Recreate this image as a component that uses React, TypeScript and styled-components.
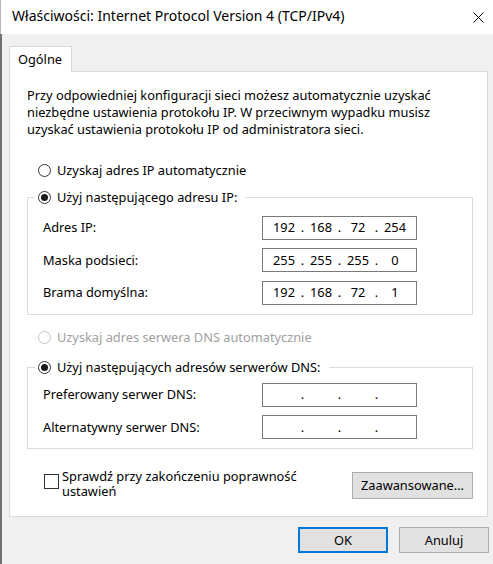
import React from "react";
import styled, { createGlobalStyle } from "styled-components";

const GlobalStyle = createGlobalStyle`
  html, body {
    margin: 0;
    padding: 0;
    background: #f0f0f0;
  }
  body {
    font-family: "Noto Sans", "Segoe UI", sans-serif;
    font-size: 12.8px;
    color: #000;
  }
  *, *::before, *::after {
    box-sizing: border-box;
  }
`;

const Window = styled.div`
  width: 493px;
  height: 564px;
  display: flex;
  flex-direction: column;
  overflow: hidden;
  background: #f0f0f0;
`;

const TitleBar = styled.div`
  height: 34px;
  flex: none;
  background: #fff;
  display: flex;
  align-items: flex-start;
  justify-content: space-between;
  padding: 5.5px 9px 0 11px;
  border-left: 1px solid #b8b8b8;
`;

const Title = styled.div`
  font-size: 14px;
  line-height: 20px;
  color: #000;
`;

const CloseIcon = styled.svg`
  width: 11px;
  height: 11px;
  margin-top: 6px;
`;

const Body = styled.div`
  flex: 1;
  display: flex;
  flex-direction: column;
  padding: 12px 5px 10px 7px;
  border-left: 2px solid #707070;
`;

const TabStrip = styled.div`
  display: flex;
`;

const Tab = styled.div`
  position: relative;
  z-index: 1;
  background: #fff;
  border: 1px solid #d9d9d9;
  border-bottom: none;
  padding: 3.5px 9px 4.5px 8px;
  line-height: 17px;
  margin-bottom: -1px;
`;

const Panel = styled.div`
  background: #fff;
  border: 1px solid #d9d9d9;
  padding: 15px 14px 17.5px 17px;
  display: flex;
  flex-direction: column;
`;

const Intro = styled.p`
  margin: 0;
  line-height: 17px;
`;

const RadioLabel = styled.span<{ $disabled?: boolean }>`
  display: flex;
  align-items: center;
  gap: 6px;
  height: 17px;
  line-height: 17px;
  color: ${(p) => (p.$disabled ? "#a0a0a0" : "#000")};
`;

const RadioCircle = styled.span<{ $checked?: boolean; $disabled?: boolean }>`
  width: 13px;
  height: 13px;
  flex: none;
  border-radius: 50%;
  border: 1px solid ${(p) => (p.$disabled ? "#c4c4c4" : "#333")};
  background: #fff;
  display: flex;
  align-items: center;
  justify-content: center;
  &::after {
    content: "";
    display: ${(p) => (p.$checked ? "block" : "none")};
    width: 7px;
    height: 7px;
    border-radius: 50%;
    background: #1a1a1a;
  }
`;

const RadioRow = styled.div<{ $top: number }>`
  display: flex;
  margin: ${(p) => p.$top}px 0 0 11px;
`;

const Group = styled.fieldset<{ $top: number }>`
  margin: ${(p) => p.$top}px 0 0 0;
  padding: 0;
  min-width: 0;
  border: 1px solid #dcdcdc;
`;

const Legend = styled.legend`
  display: flex;
  margin-left: 7px;
  padding: 0 8px 0 3px;
  height: 17px;
  line-height: 17px;
`;

const FieldGrid = styled.div<{ $top: number }>`
  display: grid;
  grid-template-columns: 219px 155px;
  row-gap: 8.5px;
  align-items: center;
  padding: ${(p) => p.$top}px 0 9px 15px;
`;

const FieldLabel = styled.span`
  line-height: 17px;
`;

const IpBox = styled.div`
  height: 24px;
  border: 1px solid #7a7a7a;
  background: #fff;
  display: flex;
  align-items: center;
  padding-left: 6px;
  line-height: 17px;
`;

const Octet = styled.span`
  width: 30px;
  text-align: center;
`;

const Dot = styled.span`
  width: 7px;
  text-align: center;
`;

const CheckRow = styled.div`
  display: flex;
  justify-content: space-between;
  align-items: flex-end;
  margin-top: 19.5px;
  padding-left: 17px;
`;

const CheckLabel = styled.label`
  display: flex;
  align-items: flex-start;
  gap: 3px;
`;

const CheckBox = styled.span`
  width: 15px;
  height: 15px;
  flex: none;
  margin-top: 5px;
  border: 1px solid #333;
  background: #fff;
`;

const CheckText = styled.span`
  max-width: 250px;
  line-height: 15px;
`;

const Button = styled.button<{ $width: number; $height: number; $default?: boolean }>`
  width: ${(p) => p.$width}px;
  height: ${(p) => p.$height}px;
  padding: 0;
  font: inherit;
  color: #000;
  background: #e1e1e1;
  border: 1px solid ${(p) => (p.$default ? "#0078d7" : "#adadad")};
  box-shadow: ${(p) => (p.$default ? "inset 0 0 0 1px #0078d7" : "none")};
`;

const Footer = styled.div`
  display: flex;
  justify-content: flex-end;
  gap: 11px;
  margin: 10px -1px 0 0;
`;

type Octets = [string, string, string, string];

function IpField({ value }: { value: Octets }) {
  return (
    <IpBox>
      {value.map((v, i) => (
        <React.Fragment key={i}>
          <Octet>{v}</Octet>
          {i < 3 && <Dot>.</Dot>}
        </React.Fragment>
      ))}
    </IpBox>
  );
}

function Radio({ label, checked, disabled }: { label: string; checked?: boolean; disabled?: boolean }) {
  return (
    <RadioLabel $disabled={disabled}>
      <RadioCircle $checked={checked} $disabled={disabled} />
      {label}
    </RadioLabel>
  );
}

const ipRows: { label: string; value: Octets }[] = [
  { label: "Adres IP:", value: ["192", "168", "72", "254"] },
  { label: "Maska podsieci:", value: ["255", "255", "255", "0"] },
  { label: "Brama domyślna:", value: ["192", "168", "72", "1"] },
];

const dnsRows: { label: string; value: Octets }[] = [
  { label: "Preferowany serwer DNS:", value: ["", "", "", ""] },
  { label: "Alternatywny serwer DNS:", value: ["", "", "", ""] },
];

export default function App() {
  return (
    <>
      <GlobalStyle />
      <Window>
        <TitleBar>
          <Title>Właściwości: Internet Protocol Version 4 (TCP/IPv4)</Title>
          <CloseIcon viewBox="0 0 11 11">
            <path d="M0.5 0.5 L10.5 10.5 M10.5 0.5 L0.5 10.5" stroke="#000" strokeWidth="1" fill="none" />
          </CloseIcon>
        </TitleBar>
        <Body>
          <TabStrip>
            <Tab>Ogólne</Tab>
          </TabStrip>
          <Panel>
            <Intro>
              Przy odpowiedniej konfiguracji sieci możesz automatycznie uzyskać
              <br />
              niezbędne ustawienia protokołu IP. W przeciwnym wypadku musisz
              <br />
              uzyskać ustawienia protokołu IP od administratora sieci.
            </Intro>
            <RadioRow $top={24}>
              <Radio label="Uzyskaj adres IP automatycznie" />
            </RadioRow>
            <Group $top={10}>
              <Legend>
                <Radio label="Użyj następującego adresu IP:" checked />
              </Legend>
              <FieldGrid $top={9.5}>
                {ipRows.map((r) => (
                  <React.Fragment key={r.label}>
                    <FieldLabel>{r.label}</FieldLabel>
                    <IpField value={r.value} />
                  </React.Fragment>
                ))}
              </FieldGrid>
            </Group>
            <RadioRow $top={14.5}>
              <Radio label="Uzyskaj adres serwera DNS automatycznie" disabled />
            </RadioRow>
            <Group $top={13}>
              <Legend>
                <Radio label="Użyj następujących adresów serwerów DNS:" checked />
              </Legend>
              <FieldGrid $top={6.5}>
                {dnsRows.map((r) => (
                  <React.Fragment key={r.label}>
                    <FieldLabel>{r.label}</FieldLabel>
                    <IpField value={r.value} />
                  </React.Fragment>
                ))}
              </FieldGrid>
            </Group>
            <CheckRow>
              <CheckLabel>
                <CheckBox />
                <CheckText>Sprawdź przy zakończeniu poprawność ustawień</CheckText>
              </CheckLabel>
              <Button $width={121} $height={27}>
                Zaawansowane...
              </Button>
            </CheckRow>
          </Panel>
          <Footer>
            <Button $width={90} $height={26} $default>
              OK
            </Button>
            <Button $width={90} $height={26}>
              Anuluj
            </Button>
          </Footer>
        </Body>
      </Window>
    </>
  );
}
